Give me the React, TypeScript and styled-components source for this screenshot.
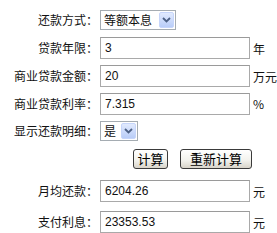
import React from "react";
import styled, { createGlobalStyle } from "styled-components";

const GlobalStyle = createGlobalStyle`
  html, body { margin: 0; padding: 0; background: #fff; }
  body {
    font-family: "Noto Sans CJK SC", "Noto Sans", sans-serif;
    font-size: 12px;
    color: #000;
  }
`;

const Form = styled.div`
  display: flex;
  flex-direction: column;
  width: 277px;
  height: 233px;
  overflow: hidden;
  padding-top: 6px;
  box-sizing: border-box;
`;

const Row = styled.div<{ $h: number }>`
  display: flex;
  align-items: center;
  height: ${(p) => p.$h}px;
  flex: none;
`;

const Label = styled.label`
  flex: none;
  width: 98px;
  margin-right: 2px;
  text-align: right;
  white-space: nowrap;
  font-size: 12px;
  line-height: 14px;
  color: #111;
`;

const TextInput = styled.input`
  box-sizing: border-box;
  flex: none;
  width: 150px;
  height: 22px;
  margin: 0;
  padding: 0 4px;
  border: 1px solid #a9a9a9;
  border-top-color: #9a9a9a;
  background: #fff;
  font: 12px "Liberation Sans", Arial, sans-serif;
  color: #111;
  outline: none;
`;

const Unit = styled.span`
  margin-left: 3px;
  font-size: 12px;
  white-space: nowrap;
  color: #111;
`;

const SelectBox = styled.div<{ $w: number }>`
  box-sizing: border-box;
  flex: none;
  width: ${(p) => p.$w}px;
  height: 20px;
  border: 1px solid #a5acb2;
  background: #fff;
  display: flex;
  align-items: center;
  padding-left: 3px;
`;

const SelectText = styled.span`
  font-size: 12px;
  line-height: 14px;
  color: #111;
  white-space: nowrap;
`;

const Arrow = styled.span`
  box-sizing: border-box;
  margin-left: auto;
  margin-right: 1px;
  width: 15px;
  height: 16px;
  border: 1px solid #c6d5fa;
  border-radius: 2px;
  background: linear-gradient(#e1eafe, #b9cdf8);
  display: flex;
  align-items: center;
  justify-content: center;
`;

const ButtonRow = styled.div`
  display: flex;
  align-items: center;
  gap: 12px;
  height: 30px;
  padding-left: 133px;
  flex: none;
`;

const Button = styled.button<{ $w: number }>`
  box-sizing: border-box;
  width: ${(p) => p.$w}px;
  height: 20px;
  margin: 0;
  padding: 0;
  border: 1px solid #3a3a3a;
  border-radius: 3px;
  background: linear-gradient(#ffffff, #f3f3ee 55%, #d8d4ca);
  font: 13px "Noto Sans CJK SC", sans-serif;
  line-height: 16px;
  color: #000;
`;

const Select = ({ w, value }: { w: number; value: string }) => (
  <SelectBox $w={w}>
    <SelectText>{value}</SelectText>
    <Arrow>
      <svg width="9" height="6" viewBox="0 0 9 6">
        <path d="M1 1 L4.5 4.5 L8 1" fill="none" stroke="#4d6185" strokeWidth="1.8" />
      </svg>
    </Arrow>
  </SelectBox>
);

export default function App() {
  return (
    <>
      <GlobalStyle />
      <Form>
        <Row $h={28}>
          <Label>还款方式：</Label>
          <Select w={76} value="等额本息" />
        </Row>
        <Row $h={28}>
          <Label>贷款年限：</Label>
          <TextInput defaultValue="3" />
          <Unit>年</Unit>
        </Row>
        <Row $h={28}>
          <Label>商业贷款金额：</Label>
          <TextInput defaultValue="20" />
          <Unit>万元</Unit>
        </Row>
        <Row $h={27}>
          <Label>商业贷款利率：</Label>
          <TextInput defaultValue="7.315" />
          <Unit>%</Unit>
        </Row>
        <Row $h={27}>
          <Label>显示还款明细：</Label>
          <Select w={38} value="是" />
        </Row>
        <ButtonRow>
          <Button $w={35}>计算</Button>
          <Button $w={72}>重新计算</Button>
        </ButtonRow>
        <Row $h={34}>
          <Label>月均还款：</Label>
          <TextInput defaultValue="6204.26" />
          <Unit>元</Unit>
        </Row>
        <Row $h={28}>
          <Label>支付利息：</Label>
          <TextInput defaultValue="23353.53" />
          <Unit>元</Unit>
        </Row>
      </Form>
    </>
  );
}
